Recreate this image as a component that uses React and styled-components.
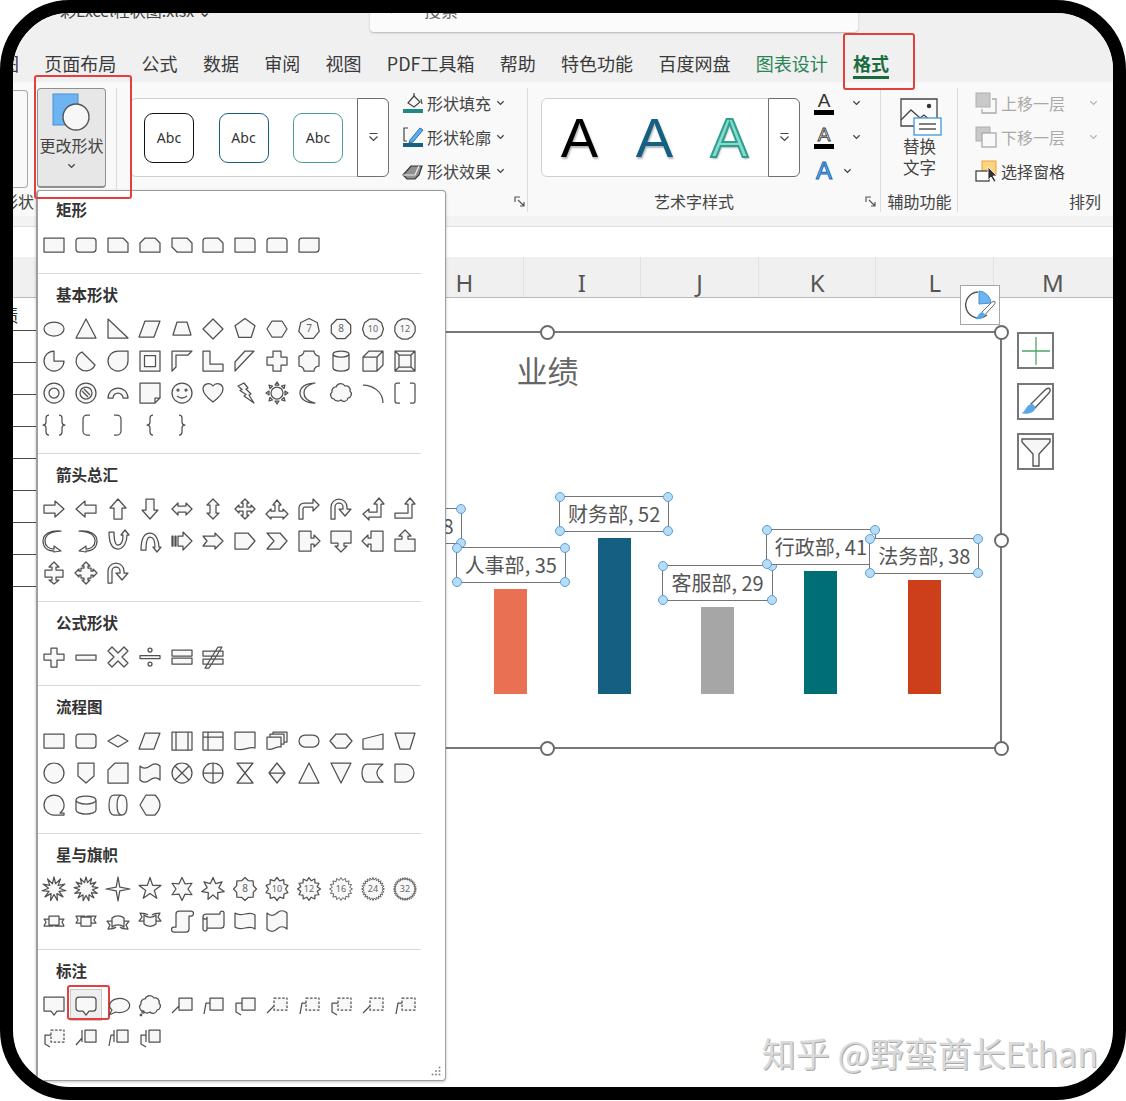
import React from 'react';
import styled, { createGlobalStyle } from 'styled-components';

const CJK = `"Noto Sans CJK SC", "Noto Sans", sans-serif`;
const RED = '#e2403f';

const GlobalStyle = createGlobalStyle`
  html, body { margin: 0; padding: 0; background: #fff; }
  body { font-family: ${CJK}; }
  * { box-sizing: border-box; }
`;

const Frame = styled.div`
  position: relative;
  width: 1126px;
  height: 1100px;
  border: 13px solid #000;
  border-radius: 70px;
  overflow: hidden;
  background: #fff;
  display: flex;
  flex-direction: column;
  isolation: isolate;
`;

/* title bar, only the bottom of it is still on the crop */
const TitleBar = styled.div`
  display: flex;
  flex: 0 0 24px;
  align-items: flex-start;
  padding-left: 47px;
  background: #f0f0f0;
`;
const FileName = styled.div`
  flex: 0 0 310px;
  margin-top: -13px;
  font-size: 16px;
  line-height: 20px;
  color: #444;
  white-space: nowrap;
`;
const SearchBox = styled.div`
  display: flex;
  align-items: flex-start;
  gap: 20px;
  width: 488px;
  height: 40px;
  margin-top: -21px;
  padding: 8px 0 0 20px;
  background: #fbfbfb;
  border-radius: 4px;
  box-shadow: 0 1px 2px #b5b5b5;
  font-size: 17px;
  line-height: 20px;
  color: #666;
`;

const TabBar = styled.div`
  position: relative;
  z-index: 2;
  display: flex;
  flex: 0 0 45px;
  align-items: center;
  gap: 25.3px;
  padding-top: 7px;
  background: #f0f0f0;
`;
const Tab = styled.div`
  position: relative;
  font-size: 18px;
  line-height: 24px;
  white-space: nowrap;
  color: ${p => p.$color || '#3a3a3a'};
  font-weight: ${p => (p.$active ? 700 : 400)};
  &:first-child { margin-left: -12px; }
  ${p => p.$active && `
    &::before {
      content: '';
      position: absolute;
      left: 0;
      right: 0;
      bottom: -4px;
      height: 3px;
      background: #1a6b3c;
    }
    &::after {
      content: '';
      position: absolute;
      top: -18px;
      left: -10px;
      right: -26px;
      bottom: -15px;
      border: 2px solid ${RED};
      border-radius: 3px;
    }
  `}
`;

const Ribbon = styled.div`
  display: flex;
  flex: 0 0 134px;
  min-height: 0;
  background: #f9f9f9;
  box-shadow: 0 2px 3px #d0d0d0;
`;
const Group = styled.div`
  position: relative;
  display: flex;
  flex-direction: column;
  flex: 0 0 ${p => p.$w}px;
  min-width: 0;
  margin-left: ${p => p.$ml || 0}px;
`;
const GroupMain = styled.div`
  position: relative;
  display: flex;
  flex: 0 0 107px;
  min-height: 0;
  align-items: flex-start;
  padding: ${p => p.$pad || '16px 0 0 13px'};
  &::after {
    content: '';
    display: ${p => (p.$nosep ? 'none' : 'block')};
    position: absolute;
    right: 0;
    top: 6px;
    height: 124px;
    border-right: 1px solid #dcdcdc;
  }
`;
const GroupLabel = styled.div`
  position: relative;
  height: 24px;
  margin-left: ${p => p.$ml || 0}px;
  font-size: 16px;
  line-height: 24px;
  color: #444;
  white-space: nowrap;
  text-align: ${p => p.$align || 'center'};
  padding-right: ${p => p.$pr || 0}px;
`;
const LauncherIcon = styled.svg`
  position: absolute;
  right: ${p => p.$r}px;
  top: 7px;
  width: 11px;
  height: 11px;
  fill: none;
  stroke: #555;
  stroke-width: 1.2;
`;

const CutButton = styled.div`
  width: 15px;
  height: 98px;
  margin: 8px 0 0 0;
  border: 1px solid #aaa;
  border-left: 0;
  border-radius: 0 4px 4px 0;
  background: #f9f9f9;
`;
const ChangeButton = styled.div`
  position: relative;
  display: flex;
  flex-direction: column;
  align-items: center;
  width: 69px;
  height: 100px;
  background: #e7e7e7;
  border: 1px solid #8f8f8f;
  border-bottom-width: 2px;
  border-radius: 4px;
  font-size: 16px;
  line-height: 22px;
  color: #444;
  white-space: nowrap;
  &::after {
    content: '';
    position: absolute;
    top: -14px;
    left: -4px;
    width: 94px;
    height: 120px;
    border: 2px solid ${RED};
    border-radius: 3px;
    z-index: 5;
  }
`;
const ChangeIcon = styled.svg`
  width: 46px;
  height: 42px;
  margin-top: 3px;
  flex: none;
`;

const Gallery = styled.div`
  display: flex;
  flex: 0 0 auto;
  height: 79px;
  background: #fff;
  border: 1px solid #cfcfcf;
  border-radius: 6px;
  margin-right: ${p => p.$mr}px;
`;
const AbcRow = styled.div`
  display: flex;
  align-items: center;
  gap: 24.5px;
  width: 226px;
  padding-left: 13px;
`;
const AbcBox = styled.div`
  display: flex;
  align-items: center;
  justify-content: center;
  width: 50px;
  height: 50px;
  border: 1.5px solid ${p => p.$c};
  border-radius: 9px;
  font-family: "Noto Sans", sans-serif;
  font-size: 14px;
  color: #333;
`;
const MoreButton = styled.div`
  display: flex;
  align-items: center;
  justify-content: center;
  width: 32px;
  margin: -1px -1px -1px 0;
  border: 1.5px solid #707070;
  border-radius: 0 6px 6px 0;
  background: #fff;
`;
const MoreIcon = styled.svg`
  width: 11px;
  height: 11px;
  fill: none;
  stroke: #444;
  stroke-width: 1.2;
`;
const WordRow = styled.div`
  display: flex;
  width: 226px;
`;
const WordLetter = styled.div`
  width: 75px;
  text-align: center;
  font-family: "Liberation Sans", sans-serif;
  font-size: 56px;
  line-height: 77px;
  color: ${p => p.$fill};
  -webkit-text-stroke: ${p => p.$stroke || '0 transparent'};
  text-shadow: 1px 2px 2px rgba(0, 0, 0, 0.3);
`;

const ActionList = styled.div`
  display: flex;
  flex-direction: column;
  margin-top: -12px;
`;
const ActionRow = styled.div`
  display: flex;
  align-items: center;
  height: 34px;
  font-size: 16px;
  color: ${p => (p.$off ? '#a9a9a9' : '#444')};
  white-space: nowrap;
`;
const ActionIcon = styled.svg`
  flex: none;
  width: 24px;
  height: 24px;
  margin-right: ${p => p.$mr ?? 2}px;
`;
const ChevronSvg = styled.svg`
  flex: none;
  width: 9px;
  height: 6px;
  margin-left: ${p => p.$ml || 0}px;
  margin-top: ${p => p.$mt || 0}px;
  fill: none;
  stroke: ${p => p.$c || '#444'};
  stroke-width: 1.4;
`;
const Chevron = props => (
  <ChevronSvg viewBox="0 0 10 6" {...props}>
    <path d="M1.5 1 5 4.5 8.5 1" />
  </ChevronSvg>
);

const FontMark = styled.div`
  display: flex;
  flex-direction: column;
  align-items: center;
  width: 22px;
  font-family: "Liberation Sans", sans-serif;
  font-size: ${p => p.$size || 19}px;
  line-height: ${p => (p.$bar ? 17 : 24)}px;
  color: ${p => p.$c || '#333'};
  -webkit-text-stroke: ${p => p.$stroke || '0 transparent'};
  &::after {
    content: '';
    display: ${p => (p.$bar ? 'block' : 'none')};
    width: 20px;
    height: 5px;
    margin-top: 1px;
    background: #000;
  }
`;

const AltColumn = styled.div`
  display: flex;
  flex-direction: column;
  align-items: center;
  width: 100%;
  font-size: 16.5px;
  line-height: 21px;
  color: #444;
`;
const AltIcon = styled.svg`
  width: 44px;
  height: 38px;
  flex: none;
`;

const GapBand = styled.div`
  flex: 0 0 11px;
  background: #f3f3f3;
  border-bottom: 1px solid #dedede;
`;
const FormulaBar = styled.div`
  flex: 0 0 30px;
  background: #fff;
`;
const ColHeaders = styled.div`
  display: flex;
  flex: 0 0 41px;
  padding-left: 393px;
  background: #f0f0f0;
  border-bottom: 1px solid #b9b9b9;
`;
const ColHeader = styled.div`
  flex: 0 0 117.6px;
  text-align: center;
  font-family: "Noto Sans", sans-serif;
  font-size: 24px;
  line-height: 51px;
  height: 40px;
  overflow: hidden;
  color: #555;
  border-right: 1px solid #e2e2e2;
  &:last-child { border-right: 0; }
`;

const Sheet = styled.div`
  flex: 1;
  padding-top: 1px;
`;
const SheetRow = styled.div`
  width: 24px;
  height: 32px;
  border-bottom: 1px solid #4a4a4a;
  font-size: 18px;
  line-height: 30px;
  color: #333;
  text-indent: -13px;
  white-space: nowrap;
`;

/* chart floats over the sheet */
const Chart = styled.div`
  position: absolute;
  left: 80px;
  top: 318px;
  width: 909px;
  height: 418px;
  display: flex;
  flex-direction: column;
  background: #fff;
  border: 2px solid #777;
  padding: 17px 24px 53px 0;
`;
const ChartTitle = styled.div`
  padding-left: 24px;
  text-align: center;
  font-size: 31px;
  line-height: 40px;
  color: #666;
`;
const Plot = styled.div`
  flex: 1;
  display: flex;
  justify-content: flex-end;
  align-items: flex-end;
`;
const BarColumn = styled.div`
  flex: 0 0 103.4px;
  min-width: 0;
  display: flex;
  flex-direction: column;
  align-items: center;
  gap: 6px;
`;
const Bar = styled.div`
  width: 33px;
  background: ${p => p.$c};
`;
const DataLabel = styled.div`
  position: relative;
  flex: none;
  height: 36px;
  padding: 0 8px;
  background: #fff;
  border: 1.5px solid #757575;
  font-size: 20px;
  line-height: 33px;
  color: #555;
  white-space: nowrap;
`;
const LabelDot = styled.span`
  position: absolute;
  left: ${p => p.$x};
  top: ${p => p.$y};
  width: 10px;
  height: 10px;
  margin: -5px 0 0 -5px;
  border-radius: 50%;
  background: #b7dcf6;
  border: 1px solid #5b9fd8;
`;
const HandleLayer = styled.div`
  position: absolute;
  inset: -1px;
  pointer-events: none;
`;
const Handle = styled.span`
  position: absolute;
  left: ${p => p.$x};
  top: ${p => p.$y};
  width: 15px;
  height: 15px;
  margin: -7.5px 0 0 -7.5px;
  border-radius: 50%;
  background: #fff;
  border: 2.5px solid #6a6a6a;
`;

const SideTools = styled.div`
  position: absolute;
  left: 1004px;
  top: 319px;
  display: flex;
  flex-direction: column;
  gap: 13.5px;
`;
const SideTool = styled.div`
  display: flex;
  align-items: center;
  justify-content: center;
  width: 37px;
  height: 37px;
  background: #fff;
  border: 2px solid #777;
`;
const QuickStyle = styled.div`
  position: absolute;
  left: 947px;
  top: 272px;
  display: flex;
  align-items: center;
  justify-content: center;
  width: 40px;
  height: 40px;
  background: #fff;
  border: 1px solid #a6a6a6;
`;

/* shape gallery dropdown */
const Menu = styled.div`
  position: absolute;
  left: 23px;
  top: 177px;
  width: 410px;
  height: 891px;
  z-index: 3;
  background: #fff;
  border: 1px solid #9e9e9e;
  border-left-width: 2px;
  border-radius: 4px;
  box-shadow: 0 1px 3px rgba(0, 0, 0, 0.25);
`;
const MenuSection = styled.div`
  padding: ${p => (p.$first ? '7px' : '9px')} 0 12px;
  margin-right: 24px;
  border-top: ${p => (p.$first ? '0' : '1px solid #d9d9d9')};
`;
const SectionTitle = styled.div`
  height: 22px;
  margin: 0 0 ${p => (p.$first ? 9 : 8)}px 18px;
  font-size: 15.5px;
  font-weight: 700;
  line-height: 22px;
  color: #333;
`;
const ShapeGrid = styled.div`
  display: grid;
  grid-template-columns: repeat(12, 31.9px);
  grid-auto-rows: 32px;
`;
const ShapeCell = styled.div`
  position: relative;
  display: flex;
  align-items: center;
  justify-content: center;
  ${p => p.$selected && `
    background: #efefef;
    border: 1px solid #c9c9c9;
    &::after {
      content: '';
      position: absolute;
      top: -5px;
      left: -4px;
      right: -9px;
      bottom: 0;
      border: 2.5px solid ${RED};
      border-radius: 3px;
    }
  `}
`;
const ShapeSvg = styled.svg`
  width: 24px;
  height: 24px;
  overflow: visible;
  fill: #f8f8f8;
  stroke: #505050;
  stroke-width: ${p => p.$thin ? 0.85 : 1.25};
  stroke-linejoin: round;
`;
const ShapeText = styled.text`
  font-family: "Noto Sans", sans-serif;
  font-size: ${p => p.$size}px;
  fill: #666;
  stroke: none;
  text-anchor: middle;
`;
const Grip = styled.svg`
  position: absolute;
  right: 3px;
  bottom: 3px;
  width: 12px;
  height: 12px;
  fill: #8a8a8a;
`;

const Watermark = styled.div`
  position: absolute;
  right: 15px;
  bottom: 14px;
  z-index: 4;
  font-size: 34px;
  line-height: 40px;
  color: #dadada;
  text-shadow: 1px 1px 0 #a9a9a9;
  white-space: nowrap;
`;

/* geometry helpers for the shape glyphs */
const round1 = n => Math.round(n * 100) / 100;
const poly = (n, r = 10.5) => {
  const pts = [];
  const start = n % 2 ? -90 : -90 + 180 / n;
  for (let i = 0; i < n; i++) {
    const a = ((start + (i * 360) / n) * Math.PI) / 180;
    pts.push(`${round1(12 + r * Math.cos(a))} ${round1(12 + r * Math.sin(a))}`);
  }
  return `M${pts.join('L')}z`;
};
const star = (n, R = 11.5, r = 5) => {
  const pts = [];
  for (let i = 0; i < n * 2; i++) {
    const a = ((-90 + (i * 180) / n) * Math.PI) / 180;
    const q = i % 2 ? r : R;
    pts.push(`${round1(12 + q * Math.cos(a))} ${round1(12 + q * Math.sin(a))}`);
  }
  return `M${pts.join('L')}z`;
};
const circle = (r, cx = 12, cy = 12) =>
  `M${cx - r} ${cy}a${r} ${r} 0 1 0 ${r * 2} 0a${r} ${r} 0 1 0 ${-r * 2} 0z`;

const FLIP_X = 'matrix(-1 0 0 1 24 0)';
const FLIP_Y = 'matrix(1 0 0 -1 0 24)';
const PARA = 'M7 4h15l-6 16H1z';
const RECT = 'M2 5h20v14H2z';
const ROUND = 'M5 5h14a3 3 0 0 1 3 3v8a3 3 0 0 1-3 3H5a3 3 0 0 1-3-3V8a3 3 0 0 1 3-3z';
const CLOUD =
  'M7 6a5 5 0 0 1 9-1a4 4 0 0 1 5 5a4 4 0 0 1-2 7a4 4 0 0 1-7 2a5 5 0 0 1-7-1a4 4 0 0 1-2-7a4 4 0 0 1 4-5z';
const UTURN = 'M2 22V10a8 8 0 0 1 16 0v2h4l-6 7-6-7h4v-2a4 4 0 0 0-8 0v12z';
const CURVE_R = 'M19 2C9 2 3 6 3 12c0 5 4 8 9 8v-3l7 5-7 1v-1C5 22 1 18 1 12 1 5 8 1 19 2z';
const CURVE_U = 'M3 3c0 10 3 17 9 17s9-8 9-14h2l-4-5-4 5h2c0 6-2 10-5 10S8 10 8 3z';
const BOX = 'M9 5h13v12H9z';
const BARBOX = 'M11 5h11v12H11z M8 5v12';
const LINE1 = 'M9 13L2 20';
const LINE2 = 'M9 10H5L3 21';
const LINE3 = 'M9 10H3v9l5 3';
const BRACE_L = 'M7 2a3 3 0 0 0-3 3v4a3 3 0 0 1-3 3a3 3 0 0 1 3 3v4a3 3 0 0 0 3 3';
const BRACE_R = 'M17 2a3 3 0 0 1 3 3v4a3 3 0 0 0 3 3a3 3 0 0 0-3 3v4a3 3 0 0 1-3 3';
const s = (d, opt = {}) => ({ d, ...opt });
const open = (d, opt = {}) => ({ d, open: true, ...opt });

const SECTIONS = [
  {
    title: '矩形',
    shapes: [
      s(RECT),
      s(ROUND),
      s('M2 5h15l5 5v9H2z'),
      s('M7 5h10l5 5v9H2v-9z'),
      s('M2 5h15l5 5v9H7l-5-5z'),
      s('M5 5h12l5 5v9H2V8a3 3 0 0 1 3-3z'),
      s('M2 5h17a3 3 0 0 1 3 3v11H2z'),
      s('M5 5h14a3 3 0 0 1 3 3v11H2V8a3 3 0 0 1 3-3z'),
      s('M5 5h17v11a3 3 0 0 1-3 3H2V8a3 3 0 0 1 3-3z'),
    ],
  },
  {
    title: '基本形状',
    shapes: [
      s('M2 12a10 7 0 1 0 20 0a10 7 0 1 0-20 0z'),
      s('M12 2L22 21H2z'),
      s('M2 2L22 21H2z'),
      s(PARA),
      s('M7 5h10l4 13H3z'),
      s('M12 2l10 10-10 10L2 12z'),
      s(poly(5)),
      s('M7 4h10l5 8-5 8H7l-5-8z'),
      s(poly(7), { label: '7' }),
      s(poly(8), { label: '8' }),
      s(poly(10), { label: '10' }),
      s(poly(12), { label: '12' }),
      s('M12 2A10 10 0 1 0 22 12H12z'),
      s('M8 3L21 16A9.85 9.85 0 1 1 8 3z'),
      s('M12 2h10v10a10 10 0 1 1-10-10z'),
      s('M2 2h20v20H2z M6.5 6.5v11h11v-11z', { evenodd: true }),
      s('M2 2h20l-4 4H6v12l-4 4z'),
      s('M2 2h7v13h13v7H2z'),
      s('M12 2h9L2 22v-9z'),
      s('M8 2h8v6h6v8h-6v6H8v-6H2V8h6z'),
      s('M7 2h10a5 5 0 0 0 5 5v10a5 5 0 0 0-5 5H7a5 5 0 0 0-5-5V7a5 5 0 0 0 5-5z'),
      s('M4 5a8 3 0 0 1 16 0v14a8 3 0 0 1-16 0z M4 5a8 3 0 0 0 16 0'),
      s('M2 8l6-6h14v14l-6 6H2z M2 8h14v14 M16 8l6-6'),
      s('M2 2h20v20H2z M6 6h12v12H6z M2 2l4 4 M22 2l-4 4 M2 22l4-4 M22 22l-4-4'),
      s(`${circle(10)} ${circle(5)}`),
      s(`${circle(10)} ${circle(6)} M8 10l6 6 M10 8l6 6`),
      s('M2 17a10 10 0 0 1 20 0h-5a5 5 0 0 0-10 0z'),
      s('M2 2h20v15l-5 5H2z M22 17h-5v5'),
      s(`${circle(10)} ${circle(1, 8, 9)} ${circle(1, 16, 9)} M7 15q5 4 10 0`),
      s('M12 21C4 15 2 11 2 8a5.5 5.5 0 0 1 10-3a5.5 5.5 0 0 1 10 3c0 3-2 7-10 13z'),
      s('M5 5l6-3 4 5-2 1 5 5-2 1 5 8-10-7 2-1.5-6-4 2-1z'),
      s(`${circle(6)} M12 1l2 3h-4z M12 23l2-3h-4z M1 12l3 2v-4z M23 12l-3 2v-4z M4 4l3.5 1L5 7.5z M20 4l-3.5 1 2.5 2.5z M4 20l3.5-1L5 16.5z M20 20l-3.5-1 2.5-2.5z`),
      s('M18 2C10 4 7 8 7 12s3 8 11 10C9 22 3 18 3 12S9 2 18 2z'),
      s(CLOUD),
      open('M2 4c10 0 20 7 20 18'),
      open('M7 2H4a2 2 0 0 0-2 2v16a2 2 0 0 0 2 2h3 M17 2h3a2 2 0 0 1 2 2v16a2 2 0 0 1-2 2h-3'),
      open(`${BRACE_L} ${BRACE_R}`),
      open('M16 2h-3a4 4 0 0 0-4 4v12a4 4 0 0 0 4 4h3'),
      open('M8 2h3a4 4 0 0 1 4 4v12a4 4 0 0 1-4 4H8'),
      open('M15 2a3 3 0 0 0-3 3v4a3 3 0 0 1-3 3a3 3 0 0 1 3 3v4a3 3 0 0 0 3 3'),
      open('M9 2a3 3 0 0 1 3 3v4a3 3 0 0 0 3 3a3 3 0 0 0-3 3v4a3 3 0 0 1-3 3'),
    ],
  },
  {
    title: '箭头总汇',
    shapes: [
      s('M2 8h11V4l9 8-9 8v-4H2z'),
      s('M22 8H11V4l-9 8 9 8v-4h11z'),
      s('M8 22V11H4l8-9 8 9h-4v11z'),
      s('M8 2v11H4l8 9 8-9h-4V2z'),
      s('M2 12l6-6v3h8V6l6 6-6 6v-3H8v3z'),
      s('M12 2l6 6h-3v8h3l-6 6-6-6h3V8H6z'),
      s('M12 2l4 4h-2v4h4V8l4 4-4 4v-2h-4v4h2l-4 4-4-4h2v-4H6v2l-4-4 4-4v2h4V6H8z'),
      s('M12 3l4 5h-2v6h4v-2l5 5-5 5v-2H6v2l-5-5 5-5v2h4V8H8z'),
      s('M2 22V11a5 5 0 0 1 5-5h9V2l6 6-6 6v-4H8a2 2 0 0 0-2 2v10z'),
      s(UTURN),
      s('M2 17l6-5v3h8V7h-3l5-6 5 6h-3v13H8v3z'),
      s('M2 16h13V7h-3l5-6 5 6h-3v14H2z'),
      s(CURVE_R),
      s(CURVE_R, { t: FLIP_X }),
      s(CURVE_U),
      s(CURVE_U, { t: FLIP_Y }),
      s('M2 7h1v10H2z M5 7h1v10H5z M8 7h5V3l9 9-9 9v-4H8z'),
      s('M2 7h12V4l8 8-8 8v-3H2l4-5z'),
      s('M2 4h13l7 8-7 8H2z'),
      s('M2 4h13l7 8-7 8H2l7-8z'),
      s('M2 2h12v7h3V6l6 6-6 6v-3h-3v7H2z'),
      s('M2 2h20v12h-7v3h3l-6 6-6-6h3v-3H2z'),
      s('M22 2H10v7H7V6l-6 6 6 6v-3h3v7h12z'),
      s('M2 22h20V10h-7V7h3l-6-6-6 6h3v3H2z'),
      s('M12 1l5 5h-3v3h7v7h-7v3h3l-5 4-5-4h3v-3H3V9h7V6H7z'),
      s('M12 1l4 4h-2v2h3v3h2V8l4 4-4 4v-2h-2v3h-3v2h2l-4 4-4-4h2v-2H7v-3H5v2l-4-4 4-4v2h2V7h3V5H8z'),
      s(UTURN),
    ],
  },
  {
    title: '公式形状',
    shapes: [
      s('M9 3h6v6h7v6h-7v7H9v-7H2V9h7z'),
      s('M2 10h20v5H2z'),
      s('M6 2l6 6 6-6 4 4-6 6 6 6-4 4-6-6-6 6-4-4 6-6-6-6z'),
      s(`M2 10.5h20v3H2z ${circle(2, 12, 5)} ${circle(2, 12, 19)}`),
      s('M2 5h20v6H2z M2 13h20v6H2z'),
      s('M2 6h20v5H2z M2 14h20v5H2z M17 2h4L8 23H4z'),
    ],
  },
  {
    title: '流程图',
    shapes: [
      s(RECT),
      s(ROUND),
      s('M12 6l10 6-10 6L2 12z'),
      s(PARA),
      s('M2 3h20v18H2z M6 3v18 M18 3v18'),
      s('M2 3h20v18H2z M7 3v18 M2 8h20'),
      s('M2 3h20v16c-7-2-11 4-20 1z'),
      s('M2 8h14v10c-5-1-9 4-14 2z M5 8V5h14v10h-3 M8 5V3h14v10h-3'),
      s('M8 6h8a6 6 0 0 1 0 12H8a6 6 0 0 1 0-12z'),
      s('M7 5h10l6 7-6 7H7l-6-7z'),
      s('M2 10l20-5v15H2z'),
      s('M2 4h20l-5 16H7z'),
      s(circle(10)),
      s('M4 2h16v13l-8 7-8-7z'),
      s('M9 2h13v20H2V9z'),
      s('M2 5c3 3 6 3 10 0s7-3 10 0v14c-3-3-6-3-10 0s-7 3-10 0z'),
      s(`${circle(10)} M5 5l14 14 M19 5L5 19`),
      s(`${circle(10)} M2 12h20 M12 2v20`),
      s('M4 2h16L4 22h16z'),
      s('M12 2l8 10-8 10-8-10z M4 12h16'),
      s('M12 2l10 20H2z'),
      s('M2 2h20L12 22z'),
      s('M6 3h16c-4 3-6 6-6 9s2 6 6 9H6c-3 0-5-4-5-9s2-9 5-9z'),
      s('M2 3h10a9 9 0 0 1 0 18H2z'),
      s('M12 2a10 10 0 1 0 0 20h10v-2h-4a10 10 0 0 0-6-18z'),
      s('M2 7a10 4 0 0 1 20 0v10a10 4 0 0 1-20 0z M2 7a10 4 0 0 0 20 0'),
      s('M8 2h8c3 0 5 4 5 10s-2 10-5 10H8c-3 0-5-4-5-10S5 2 8 2z M16 2c-3 0-5 4-5 10s2 10 5 10'),
      s('M8 2h9c3 3 5 6 5 10s-2 7-5 10H8l-6-10z'),
    ],
  },
  {
    title: '星与旗帜',
    shapes: [
      s(star(11, 12, 5.5)),
      s(star(13, 12, 6.5)),
      s(star(4, 12, 2.5)),
      s(star(5, 11.5, 4.5)),
      s(star(6, 11.5, 6)),
      s(star(7, 11.5, 6)),
      s(star(8, 11.5, 9), { label: '8' }),
      s(star(10, 11.5, 8.5), { label: '10' }),
      s(star(12, 11.5, 8.5), { label: '12' }),
      s(star(16, 11.5, 8.8), { label: '16', thin: true }),
      s(star(24, 11.5, 9), { label: '24', thin: true }),
      s(star(32, 11.5, 9.2), { label: '32', thin: true }),
      s('M7 7h10v9H7z M7 10H2l2 3-2 4h9v-1 M17 10h5l-2 3 2 4h-9v-1'),
      s('M7 7h10v9H7z M7 10H2l2 3-2 4h9v-1 M17 10h5l-2 3 2 4h-9v-1', { t: FLIP_Y }),
      s('M6 9c3-3 9-3 12 0v9c-3-3-9-3-12 0z M6 12H1l3 4-2 4c3 0 6 0 8-2 M18 12h5l-3 4 2 4c-3 0-6 0-8-2'),
      s('M6 9c3-3 9-3 12 0v9c-3-3-9-3-12 0z M6 12H1l3 4-2 4c3 0 6 0 8-2 M18 12h5l-3 4 2 4c-3 0-6 0-8-2', { t: FLIP_Y }),
      s('M6 5a3 3 0 0 1 3-3h12a2.5 2.5 0 0 1 0 5h-2v13a3 3 0 0 1-3 3H4a2.5 2.5 0 0 1 0-5h2z'),
      s('M2 8a3 3 0 0 1 3-3h14V4a2 2 0 0 1 4 0v12a3 3 0 0 1-3 3H6v1a2 2 0 0 1-4 0z M2 8a2 2 0 0 0 4 0v11'),
      s('M2 4c6 5 14-3 20 2v14c-6-5-14 3-20-2z'),
      s('M2 4c3 3 7 3 10 0s7-3 10 0v16c-3-3-7-3-10 0s-7 3-10 0z'),
    ],
  },
  {
    title: '标注',
    shapes: [
      s('M2 4h20v14H15l-3 4-3-4H2z'),
      s('M5 4h14a3 3 0 0 1 3 3v8a3 3 0 0 1-3 3h-4l-3 4-3-4H5a3 3 0 0 1-3-3V7a3 3 0 0 1 3-3z'),
      s('M6 17a10 7 0 1 1 4 2l-7 3z'),
      s(`${CLOUD} ${circle(1.2, 5, 19)} ${circle(0.8, 3, 22)}`),
      s(`${BOX} ${LINE1}`),
      s(`${BOX} ${LINE2}`),
      s(`${BOX} ${LINE3}`),
      s(LINE1, { dash: BOX }),
      s(LINE2, { dash: BOX }),
      s(LINE3, { dash: BOX }),
      s(LINE1, { dash: BOX }),
      s(LINE2, { dash: BOX }),
      s(LINE3, { dash: BOX }),
      s(`${BARBOX} M8 13L2 20`),
      s(`${BARBOX} M8 10H5L3 21`),
      s(`${BARBOX} M8 10H3v9l5 3`),
    ],
  },
];

const Shape = ({ shape }) => {
  const { d, open: isOpen, evenodd, t, dash, label, thin } = shape;
  return (
    <ShapeSvg viewBox="0 0 24 24" $thin={thin}>
      <g transform={t}>
        <path d={d} fill={isOpen ? 'none' : undefined} fillRule={evenodd ? 'evenodd' : undefined} />
        {dash && <path d={dash} strokeDasharray="2.5 1.6" />}
      </g>
      {label && (
        <ShapeText x="12" y="15.4" $size={label.length > 1 ? 9 : 10}>
          {label}
        </ShapeText>
      )}
    </ShapeSvg>
  );
};

const TABS = ['图', '页面布局', '公式', '数据', '审阅', '视图', 'PDF工具箱', '帮助', '特色功能', '百度网盘'];
const COLUMNS = ['H', 'I', 'J', 'K', 'L', 'M'];
const SERIES = [
  { name: '销售部', value: 48, color: '#196b24' },
  { name: '人事部', value: 35, color: '#e97052' },
  { name: '财务部', value: 52, color: '#156082' },
  { name: '客服部', value: 29, color: '#a6a6a6' },
  { name: '行政部', value: 41, color: '#006f75' },
  { name: '法务部', value: 38, color: '#cd3f1b' },
];
const PX_PER_UNIT = 3;
const CORNERS = [['0%', '0%'], ['100%', '0%'], ['0%', '100%'], ['100%', '100%']];
const HANDLES = [['0%', '0%'], ['50%', '0%'], ['100%', '0%'], ['0%', '50%'], ['100%', '50%'], ['0%', '100%'], ['50%', '100%'], ['100%', '100%']];

const Launcher = ({ right }) => (
  <LauncherIcon viewBox="0 0 11 11" $r={right}>
    <path d="M1 6V1h5 M1 1v0 M4 4l6 6 M10 6v4H6" />
  </LauncherIcon>
);
const More = () => (
  <MoreButton>
    <MoreIcon viewBox="0 0 11 11">
      <path d="M1.5 1.5h8 M1.5 4.5 5.5 8.5 9.5 4.5" />
    </MoreIcon>
  </MoreButton>
);
const BrushGlyph = () => (
  <g>
    <path d="M11 19 25 5Q28 2 30 4 31 6 28 9L15 23z" fill="#fff" stroke="#555" strokeWidth="1.3" />
    <path d="M1 28c4 0 5-8 10-9 2 0 5 2 4 5-1 4-9 6-14 4z" fill="#5aa7e8" />
  </g>
);

export default function App() {
  return (
    <>
      <GlobalStyle />
      <Frame>
        <TitleBar>
          <FileName>彩Excel柱状图.xlsx ⌄</FileName>
          <SearchBox>
            <svg width="14" height="14" viewBox="0 0 14 14">
              <path d="M1 13 9 5" stroke="#666" strokeWidth="1.3" fill="none" />
            </svg>
            搜索
          </SearchBox>
        </TitleBar>

        <TabBar>
          {TABS.map(t => (
            <Tab key={t}>{t}</Tab>
          ))}
          <Tab $color="#2b8456">图表设计</Tab>
          <Tab $color="#1a6b3c" $active>
            格式
          </Tab>
        </TabBar>

        <Ribbon>
          <Group $w={21}>
            <GroupMain $pad="0" $nosep>
              <CutButton />
            </GroupMain>
            <GroupLabel $align="right" $ml={-12}>
              形状
            </GroupLabel>
          </Group>

          <Group $w={80} $ml={3}>
            <GroupMain $pad="6px 0 0 0">
              <ChangeButton>
                <ChangeIcon viewBox="0 0 46 42">
                  <rect x="4" y="2" width="25" height="31" fill="#6db4f2" stroke="#4a8fd0" />
                  <circle cx="27" cy="25" r="13" fill="#f7f7f7" stroke="#555" strokeWidth="1.4" />
                </ChangeIcon>
                更改形状
                <Chevron $mt={7} />
              </ChangeButton>
            </GroupMain>
            <GroupLabel />
          </Group>

          <Group $w={411}>
            <GroupMain>
              <Gallery $mr={12}>
                <AbcRow>
                  <AbcBox $c="#111">Abc</AbcBox>
                  <AbcBox $c="#156082">Abc</AbcBox>
                  <AbcBox $c="#4c9c97">Abc</AbcBox>
                </AbcRow>
                <More />
              </Gallery>
              <ActionList>
                <ActionRow>
                  <ActionIcon viewBox="0 0 24 24">
                    <path d="M7 12 13 5l6 6-6 5-6-4z" fill="#f8f8f8" stroke="#444" strokeWidth="1.2" />
                    <path d="M13 5V2 M20 8l1 5" stroke="#444" strokeWidth="1.2" fill="none" />
                    <rect x="2" y="18" width="20" height="4" fill="#1f8a84" />
                  </ActionIcon>
                  形状填充
                  <Chevron $ml={5} />
                </ActionRow>
                <ActionRow>
                  <ActionIcon viewBox="0 0 24 24">
                    <path d="M7 3H3v13h3" stroke="#444" strokeWidth="1.2" fill="none" />
                    <path d="M9 15 19 3l3 2-10 12-4 1z" fill="#5aaef0" stroke="#2b6fad" />
                    <rect x="2" y="18" width="20" height="4" fill="#156082" />
                  </ActionIcon>
                  形状轮廓
                  <Chevron $ml={5} />
                </ActionRow>
                <ActionRow>
                  <ActionIcon viewBox="0 0 24 24">
                    <path d="M2 16 10 7h11l-3 9-4 4H6z" fill="#8f8f8f" stroke="#333" strokeWidth="1.2" />
                    <path d="M2 16h12l4-9" fill="none" stroke="#eee" strokeWidth="1.2" />
                  </ActionIcon>
                  形状效果
                  <Chevron $ml={5} />
                </ActionRow>
              </ActionList>
            </GroupMain>
            <GroupLabel>
              形状样式
              <Launcher right={3} />
            </GroupLabel>
          </Group>

          <Group $w={353}>
            <GroupMain>
              <Gallery $mr={13}>
                <WordRow>
                  <WordLetter $fill="#000">A</WordLetter>
                  <WordLetter $fill="#156082">A</WordLetter>
                  <WordLetter $fill="#86dcca" $stroke="2px #2f9f92">A</WordLetter>
                </WordRow>
                <More />
              </Gallery>
              <ActionList>
                <ActionRow>
                  <FontMark $bar>A</FontMark>
                  <Chevron $ml={17} />
                </ActionRow>
                <ActionRow>
                  <FontMark $bar $c="#eee" $stroke="0.8px #333">A</FontMark>
                  <Chevron $ml={17} />
                </ActionRow>
                <ActionRow>
                  <FontMark $size={24} $c="#6db4f2" $stroke="1px #1c68b0">A</FontMark>
                  <Chevron $ml={8} />
                </ActionRow>
              </ActionList>
            </GroupMain>
            <GroupLabel $pr={21}>
              艺术字样式
              <Launcher right={5} />
            </GroupLabel>
          </Group>

          <Group $w={77}>
            <GroupMain $pad="16px 0 0 0">
              <AltColumn>
                <AltIcon viewBox="0 0 44 38">
                  <path d="M3 1h36v27H3z" fill="#fafafa" stroke="#444" strokeWidth="1.3" />
                  <path d="M3 22 13 12l9 8 4-3 8 7" fill="none" stroke="#444" strokeWidth="1.3" />
                  <circle cx="31" cy="8" r="2.2" fill="#333" />
                  <rect x="16" y="20" width="27" height="17" fill="#fff" stroke="#3d9ad9" strokeWidth="1.3" />
                  <path d="M21 26h17 M21 31h17" stroke="#555" strokeWidth="1.3" />
                </AltIcon>
                <div>替换</div>
                <div>文字</div>
              </AltColumn>
            </GroupMain>
            <GroupLabel>辅助功能</GroupLabel>
          </Group>

          <Group $w={155}>
            <GroupMain $pad="16px 0 0 16px" $nosep>
              <ActionList>
                <ActionRow $off>
                  <ActionIcon viewBox="0 0 24 24" $mr={3}>
                    <rect x="2" y="2" width="14" height="14" fill="#c9c9c9" stroke="#b0b0b0" />
                    <path d="M18 8h4v14H8v-4" fill="none" stroke="#a9a9a9" strokeWidth="1.3" />
                  </ActionIcon>
                  上移一层
                  <Chevron $ml={24} $c="#b5b5b5" />
                </ActionRow>
                <ActionRow $off>
                  <ActionIcon viewBox="0 0 24 24" $mr={3}>
                    <rect x="2" y="2" width="14" height="14" fill="#c9c9c9" stroke="#b0b0b0" />
                    <rect x="8" y="8" width="14" height="14" fill="#f9f9f9" stroke="#a9a9a9" strokeWidth="1.3" />
                  </ActionIcon>
                  下移一层
                  <Chevron $ml={24} $c="#b5b5b5" />
                </ActionRow>
                <ActionRow>
                  <ActionIcon viewBox="0 0 24 24" $mr={3}>
                    <rect x="8" y="2" width="14" height="14" fill="#fad47e" stroke="#e8a33d" />
                    <rect x="2" y="12" width="13" height="10" fill="#fff" stroke="#444" strokeWidth="1.3" />
                    <path d="M14 8v13l3-3 3 5 2-1-3-5h4z" fill="#333" stroke="#fff" strokeWidth="0.8" />
                  </ActionIcon>
                  选择窗格
                </ActionRow>
              </ActionList>
            </GroupMain>
            <GroupLabel $align="right" $pr={12}>
              排列
            </GroupLabel>
          </Group>
        </Ribbon>

        <GapBand />
        <FormulaBar />
        <ColHeaders>
          {COLUMNS.map(c => (
            <ColHeader key={c}>{c}</ColHeader>
          ))}
        </ColHeaders>

        <Sheet>
          <SheetRow>绩</SheetRow>
          {[...Array(8).keys()].map(i => (
            <SheetRow key={i} />
          ))}
        </Sheet>

        <QuickStyle>
          <svg width="34" height="34" viewBox="0 0 34 34">
            <path d="M15 4a13 13 0 1 0 9 23" fill="none" stroke="#555" strokeWidth="1.4" />
            <path d="M16 3a13 13 0 0 1 12 12l-12 1z" fill="#6db4f2" stroke="#4a8fd0" />
            <g transform="translate(11 11) scale(0.7)">
              <BrushGlyph />
            </g>
          </svg>
        </QuickStyle>

        <Chart>
          <ChartTitle>业绩</ChartTitle>
          <Plot>
            {SERIES.map(item => (
              <BarColumn key={item.name}>
                <DataLabel>
                  {item.name}, {item.value}
                  {CORNERS.map(([x, y]) => (
                    <LabelDot key={x + y} $x={x} $y={y} />
                  ))}
                </DataLabel>
                <Bar $c={item.color} style={{ height: item.value * PX_PER_UNIT }} />
              </BarColumn>
            ))}
          </Plot>
          <HandleLayer>
            {HANDLES.map(([x, y]) => (
              <Handle key={x + y} $x={x} $y={y} />
            ))}
          </HandleLayer>
        </Chart>

        <SideTools>
          <SideTool>
            <svg width="30" height="30" viewBox="0 0 30 30">
              <path d="M15 1v28 M1 15h28" stroke="#4ea765" strokeWidth="1.3" />
            </svg>
          </SideTool>
          <SideTool>
            <svg width="32" height="32" viewBox="0 0 32 32">
              <BrushGlyph />
            </svg>
          </SideTool>
          <SideTool>
            <svg width="32" height="32" viewBox="0 0 32 32">
              <path d="M2 3h28v3L19 18v12h-6V18L2 6z" fill="#f6f6f6" stroke="#555" strokeWidth="1.4" />
            </svg>
          </SideTool>
        </SideTools>

        <Menu>
          {SECTIONS.map((section, i) => (
            <MenuSection key={section.title} $first={i === 0}>
              <SectionTitle $first={i === 0}>{section.title}</SectionTitle>
              <ShapeGrid>
                {section.shapes.map((shape, j) => (
                  <ShapeCell key={j} $selected={section.title === '标注' && j === 1}>
                    <Shape shape={shape} />
                  </ShapeCell>
                ))}
              </ShapeGrid>
            </MenuSection>
          ))}
          <Grip viewBox="0 0 12 12">
            <circle cx="9.5" cy="2.5" r="1" />
            <circle cx="9.5" cy="6" r="1" />
            <circle cx="6" cy="6" r="1" />
            <circle cx="9.5" cy="9.5" r="1" />
            <circle cx="6" cy="9.5" r="1" />
            <circle cx="2.5" cy="9.5" r="1" />
          </Grip>
        </Menu>

        <Watermark>知乎 @野蛮酋长Ethan</Watermark>
      </Frame>
    </>
  );
}
